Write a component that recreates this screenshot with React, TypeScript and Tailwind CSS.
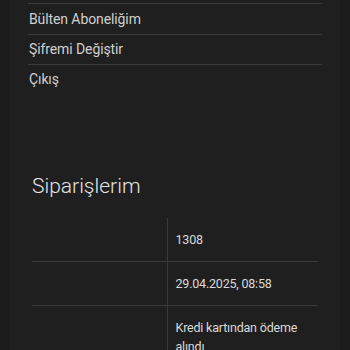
const menuItems = [
  { label: "Bülten Aboneliğim", h: "h-[31px]" },
  { label: "Şifremi Değiştir", h: "h-[30px]" },
  { label: "Çıkış", h: "h-[30px]" },
];

const orderRows = [
  { label: "", value: "1308" },
  { label: "", value: "29.04.2025, 08:58" },
  { label: "", value: "Kredi kartından ödeme alındı" },
];

export default function App() {
  return (
    <div className="min-h-[350px] h-[350px] overflow-hidden bg-[#1b1b1b] font-['Roboto',sans-serif]">
      <div className="mx-[10px] h-full bg-[#1f1f1f] px-[18px] pt-[3px]">
        {/* Account menu */}
        <ul>
          {menuItems.map((item) => (
            <li
              key={item.label}
              className={`${item.h} flex items-center border-t border-[#3a3a3a] pl-[1px] text-[14px] tracking-[-0.1px] text-[#cfcfcf]`}
            >
              {item.label}
            </li>
          ))}
        </ul>

        {/* Orders */}
        <div className="px-[4px] pt-[78px]">
          <h2 className="text-[21px] leading-[28px] font-light text-[#e4e4e4]">
            Siparişlerim
          </h2>
          <table className="mt-[18px] w-full border-collapse text-[12.5px] leading-[19px] tracking-[-0.2px] text-[#dadada]">
            <tbody>
              {orderRows.map((row, i) => (
                <tr key={i} className={i > 0 ? "border-t border-[#3a3a3a]" : ""}>
                  <td className="w-[135px] py-3 pr-2">{row.label}</td>
                  <td className="border-l border-[#3a3a3a] py-3 pl-2 pr-4 align-top">
                    {row.value}
                  </td>
                </tr>
              ))}
            </tbody>
          </table>
        </div>
      </div>
    </div>
  );
}
